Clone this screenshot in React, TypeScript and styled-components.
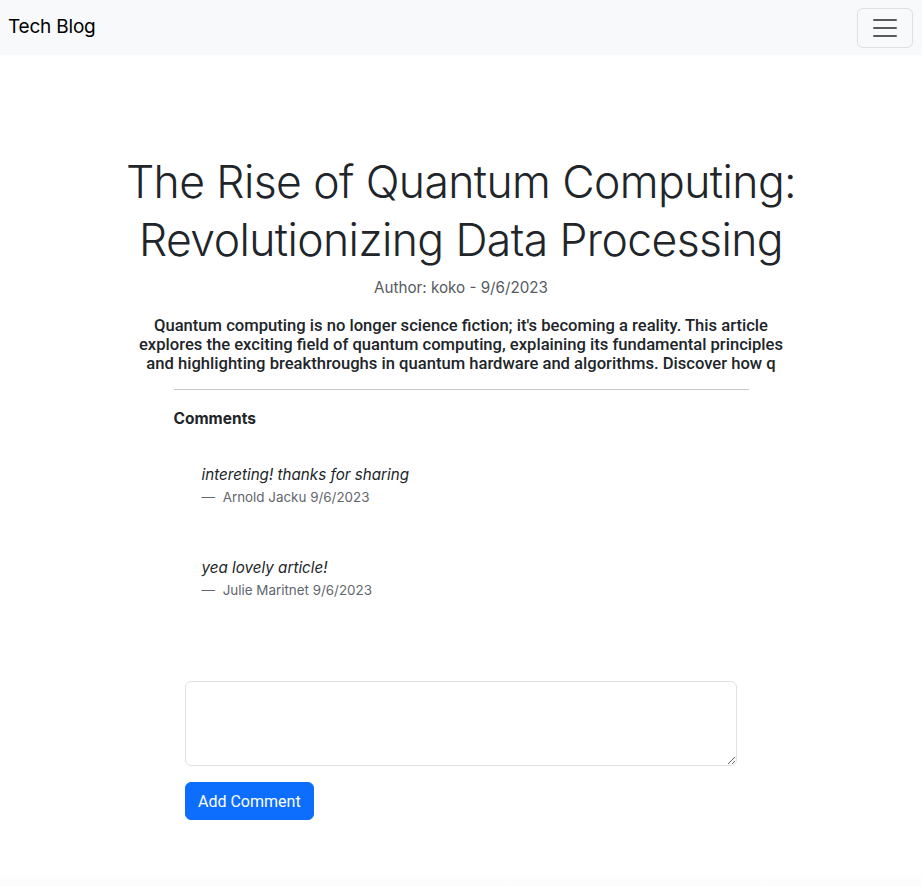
import React from "react";
import styled, { createGlobalStyle } from "styled-components";

const Global = createGlobalStyle`
  html, body { margin: 0; padding: 0; background: #fff; }
  body {
    font-family: Inter, "Liberation Sans", Arial, sans-serif;
    color: #212529;
    font-size: 16px;
    line-height: 1.5;
  }
  * { box-sizing: border-box; }
`;

const Navbar = styled.nav`
  height: 55px;
  background: #f8f9fa;
  display: flex;
  align-items: center;
  justify-content: space-between;
  padding: 0 9px 0 8px;
`;

const Brand = styled.a`
  font-size: 19px;
  color: #000;
  text-decoration: none;
  letter-spacing: -0.2px;
`;

const Toggler = styled.button`
  width: 56px;
  height: 40px;
  border: 1px solid rgba(0, 0, 0, 0.1);
  border-radius: 6px;
  background: transparent;
  display: flex;
  align-items: center;
  justify-content: center;
  padding: 0;
`;

const Main = styled.main`
  display: flex;
  flex-direction: column;
  align-items: center;
  padding-top: 99px;
`;

const Title = styled.h1`
  margin: 0;
  font-size: 44.5px;
  font-weight: 300;
  line-height: 57.5px;
  text-align: center;
  letter-spacing: -0.6px;
  max-width: 720px;
`;

const Author = styled.p`
  margin: 7px 0 0;
  color: #555b61;
  font-size: 15.2px;
  line-height: 24px;
  text-align: center;
`;

const Summary = styled.p`
  margin: 16px 0 0;
  width: 680px;
  font-family: Roboto, "Liberation Sans", sans-serif;
  font-size: 16.6px;
  font-weight: 500;
  line-height: 19px;
  text-align: center;
`;

const Rule = styled.hr`
  width: 575px;
  margin: 16px 0 0;
  border: 0;
  border-top: 1px solid #c6c7c8;
`;

const CommentsSection = styled.section`
  width: 575px;
  padding-top: 17px;
`;

const CommentsHeading = styled.h6`
  margin: 0;
  font-size: 15.5px;
  font-weight: 700;
  line-height: 24px;
`;

const CommentList = styled.div`
  display: flex;
  flex-direction: column;
  gap: 48px;
  padding: 32px 0 0 28px;
`;

const Comment = styled.figure`
  margin: 0;
`;

const CommentText = styled.blockquote`
  margin: 0;
  font-style: italic;
  font-size: 15.2px;
  line-height: 24px;
`;

const CommentFooter = styled.figcaption`
  color: #5f666d;
  font-size: 13.4px;
  line-height: 21px;
  &::before {
    content: "— ";
    margin-right: 4px;
  }
`;

const Form = styled.form`
  width: 552px;
  margin-top: 80px;
  display: flex;
  flex-direction: column;
  align-items: flex-start;
  gap: 16px;
`;

const TextArea = styled.textarea`
  width: 552px;
  height: 85px;
  border: 1px solid #dee2e6;
  border-radius: 6px;
  font-family: inherit;
  font-size: 16px;
  padding: 6px 12px;
  resize: vertical;
`;

const Button = styled.button`
  height: 38px;
  padding: 0 12px;
  border: 1px solid #0d6efd;
  background: #0d6efd;
  color: #fff;
  border-radius: 6px;
  font-family: Roboto, "Liberation Sans", sans-serif;
  font-size: 16px;
`;

const Footer = styled.div`
  height: 16px;
  margin-top: 50px;
  background: linear-gradient(#fff, #fcfcfc);
`;

const comments = [
  { text: "intereting! thanks for sharing", author: "Arnold Jacku", date: "9/6/2023" },
  { text: "yea lovely article!", author: "Julie Maritnet", date: "9/6/2023" },
];

export default function App() {
  return (
    <>
      <Global />
      <Navbar>
        <Brand href="#">Tech Blog</Brand>
        <Toggler aria-label="Toggle navigation">
          <svg width="30" height="30" viewBox="0 0 30 30">
            <path
              d="M4 7h22M4 15h22M4 23h22"
              stroke="rgba(33,37,41,0.75)"
              strokeWidth="2"
              strokeLinecap="round"
              strokeMiterlimit="10"
            />
          </svg>
        </Toggler>
      </Navbar>
      <Main>
        <Title>
          The Rise of Quantum Computing:
          <br />
          Revolutionizing Data Processing
        </Title>
        <Author>Author: koko - 9/6/2023</Author>
        <Summary>
          Quantum computing is no longer science fiction; it's becoming a reality. This article
          <br />
          explores the exciting field of quantum computing, explaining its fundamental principles
          <br />
          and highlighting breakthroughs in quantum hardware and algorithms. Discover how q
        </Summary>
        <Rule />
        <CommentsSection>
          <CommentsHeading>Comments</CommentsHeading>
          <CommentList>
            {comments.map((c) => (
              <Comment key={c.author}>
                <CommentText>{c.text}</CommentText>
                <CommentFooter>
                  {c.author} {c.date}
                </CommentFooter>
              </Comment>
            ))}
          </CommentList>
        </CommentsSection>
        <Form onSubmit={(e) => e.preventDefault()}>
          <TextArea />
          <Button type="submit">Add Comment</Button>
        </Form>
      </Main>
      <Footer />
    </>
  );
}
